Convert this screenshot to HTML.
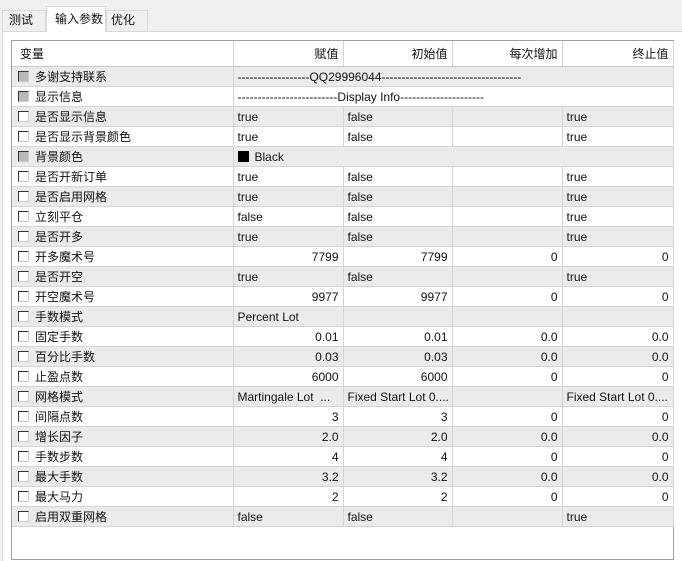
<!DOCTYPE html>
<html><head><meta charset="utf-8"><style>
*{margin:0;padding:0;box-sizing:border-box}
body{width:682px;height:553px;overflow:hidden;background:#f0f0f0;font-family:"Liberation Sans","Noto Sans CJK SC",sans-serif;font-size:12px;color:#111;position:relative}
.tab{position:absolute;top:10px;height:21px;line-height:19px;padding-left:6px;background:#f0f0f0;border:1px solid #d9d9d9;border-bottom:none}
.tab.a{top:6px;height:26px;background:#fff;z-index:2;line-height:24px;padding-left:12px}
.panel{position:absolute;left:2px;top:31px;width:682px;height:530px;background:#fff;border-top:1px solid #d9d9d9;border-left:1px solid #d9d9d9}
.tbl{position:absolute;left:11px;top:40px;width:663px;height:520px;border:1px solid #a0a0a0;background:#fff}
table{border-collapse:collapse;table-layout:fixed;width:661px}
td{height:20px;border-right:1px solid #d4d4d4;border-bottom:1px solid #d4d4d4;padding:1px 4px 0;white-space:nowrap;overflow:hidden}
tr.h td{height:25px;border-bottom:1px solid #c8c8c8}
tr:nth-child(even) td{background:#ebebeb}
tr.h td{background:#fff}
.r{text-align:right}
.cb{display:inline-block;width:11px;height:11px;border:1px solid #333;border-right-color:#ccc;border-bottom-color:#ccc;background:#fff;vertical-align:-1px;margin:0 6px 0 2px}
.cb.g{background:#b8b8b8}
.sw{display:inline-block;width:11px;height:11px;background:#000;vertical-align:-1px;margin-right:6px}
</style></head><body>
<div class="tab" style="left:2px;width:44px">测试</div>
<div class="tab a" style="left:46px;width:60px;padding-left:8px">输入参数</div>
<div class="tab" style="left:106px;width:42px;padding-left:4px">优化</div>
<div class="panel"></div>
<div class="tbl"><table>
<colgroup><col style="width:221px"><col style="width:110px"><col style="width:109px"><col style="width:110px"><col style="width:111px"></colgroup>
<tr class="h"><td style="padding-left:8px">变量</td><td class="r">赋值</td><td class="r">初始值</td><td class="r">每次增加</td><td class="r">终止值</td></tr>
<tr><td><span class="cb g"></span>多谢支持联系</td><td colspan="4">------------------QQ29996044-----------------------------------</td></tr>
<tr><td><span class="cb g"></span>显示信息</td><td colspan="4">-------------------------Display Info---------------------</td></tr>
<tr><td><span class="cb"></span>是否显示信息</td><td>true</td><td>false</td><td></td><td>true</td></tr>
<tr><td><span class="cb"></span>是否显示背景颜色</td><td>true</td><td>false</td><td></td><td>true</td></tr>
<tr><td><span class="cb g"></span>背景颜色</td><td colspan="4"><span class="sw"></span>Black</td></tr>
<tr><td><span class="cb"></span>是否开新订单</td><td>true</td><td>false</td><td></td><td>true</td></tr>
<tr><td><span class="cb"></span>是否启用网格</td><td>true</td><td>false</td><td></td><td>true</td></tr>
<tr><td><span class="cb"></span>立刻平仓</td><td>false</td><td>false</td><td></td><td>true</td></tr>
<tr><td><span class="cb"></span>是否开多</td><td>true</td><td>false</td><td></td><td>true</td></tr>
<tr><td><span class="cb"></span>开多魔术号</td><td class="r">7799</td><td class="r">7799</td><td class="r">0</td><td class="r">0</td></tr>
<tr><td><span class="cb"></span>是否开空</td><td>true</td><td>false</td><td></td><td>true</td></tr>
<tr><td><span class="cb"></span>开空魔术号</td><td class="r">9977</td><td class="r">9977</td><td class="r">0</td><td class="r">0</td></tr>
<tr><td><span class="cb"></span>手数模式</td><td>Percent Lot</td><td></td><td></td><td></td></tr>
<tr><td><span class="cb"></span>固定手数</td><td class="r">0.01</td><td class="r">0.01</td><td class="r">0.0</td><td class="r">0.0</td></tr>
<tr><td><span class="cb"></span>百分比手数</td><td class="r">0.03</td><td class="r">0.03</td><td class="r">0.0</td><td class="r">0.0</td></tr>
<tr><td><span class="cb"></span>止盈点数</td><td class="r">6000</td><td class="r">6000</td><td class="r">0</td><td class="r">0</td></tr>
<tr><td><span class="cb"></span>网格模式</td><td>Martingale Lot &nbsp;...</td><td>Fixed Start Lot 0....</td><td></td><td>Fixed Start Lot 0....</td></tr>
<tr><td><span class="cb"></span>间隔点数</td><td class="r">3</td><td class="r">3</td><td class="r">0</td><td class="r">0</td></tr>
<tr><td><span class="cb"></span>增长因子</td><td class="r">2.0</td><td class="r">2.0</td><td class="r">0.0</td><td class="r">0.0</td></tr>
<tr><td><span class="cb"></span>手数步数</td><td class="r">4</td><td class="r">4</td><td class="r">0</td><td class="r">0</td></tr>
<tr><td><span class="cb"></span>最大手数</td><td class="r">3.2</td><td class="r">3.2</td><td class="r">0.0</td><td class="r">0.0</td></tr>
<tr><td><span class="cb"></span>最大马力</td><td class="r">2</td><td class="r">2</td><td class="r">0</td><td class="r">0</td></tr>
<tr><td><span class="cb"></span>启用双重网格</td><td>false</td><td>false</td><td></td><td>true</td></tr>
</table></div>
</body></html>
